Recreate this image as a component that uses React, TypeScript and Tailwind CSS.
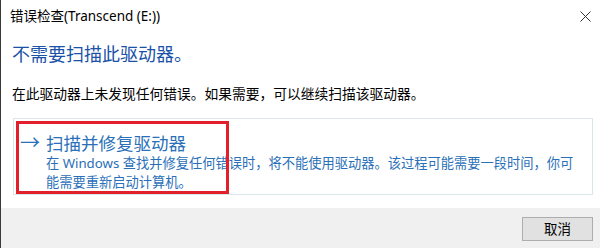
import React from 'react';

const FONT = '"Noto Sans", "Noto Sans CJK SC", sans-serif';

function CloseIcon() {
  return (
    <svg width="11" height="11" viewBox="0 0 11 11" fill="none" stroke="#333" strokeWidth="1">
      <path d="M0.5 0.5 L10.5 10.5 M10.5 0.5 L0.5 10.5" />
    </svg>
  );
}

export default function App() {
  return (
    <div
      className="w-[600px] h-[248px] bg-white border-l border-[#3a3a3a] flex flex-col overflow-hidden"
      style={{ fontFamily: FONT }}
    >
      {/* title bar */}
      <div className="h-[32px] flex items-center justify-between pl-[9px] pr-[9px]">
        <span className="text-[13.5px] text-black">错误检查(Transcend (E:))</span>
        <CloseIcon />
      </div>

      {/* body */}
      <div className="px-[11px] pt-[10px]">
        <h1 className="text-[18px] leading-[24px] text-[#1a52a8]">不需要扫描此驱动器。</h1>
        <p className="mt-[19px] text-[13.75px] leading-[18px] text-black">
          在此驱动器上未发现任何错误。如果需要，可以继续扫描该驱动器。
        </p>

        <div className="mt-[15px] mr-[-4px] ml-[1px] h-[77px] border border-[#dbe6ec] relative">
          <div className="absolute left-[2px] top-[2px] w-[213px] h-[73px] border-[3px] border-[#e2202c] pointer-events-none" />
          <div className="flex pl-[6px] pt-[13px]">
            <span className="w-[26px] text-[20px] leading-[22px] text-[#2a70b8]">→</span>
            <div className="flex flex-col">
              <span className="text-[17.5px] leading-[22px] text-[#2a70b8]">扫描并修复驱动器</span>
              <span className="text-[13.25px] leading-[19px] text-[#2a70b8] w-[540px]">
                在 Windows 查找并修复任何错误时，将不能使用驱动器。该过程可能需要一段时间，你可能需要重新启动计算机。
              </span>
            </div>
          </div>
        </div>
      </div>

      {/* footer */}
      <div className="mt-auto h-[40px] bg-[#f0f0f0] flex items-center justify-end pr-[7px] pt-[2px]">
        <button className="w-[71px] h-[24px] bg-[#e1e1e1] border border-[#adadad] text-[13.5px] text-black">
          取消
        </button>
      </div>
    </div>
  );
}
